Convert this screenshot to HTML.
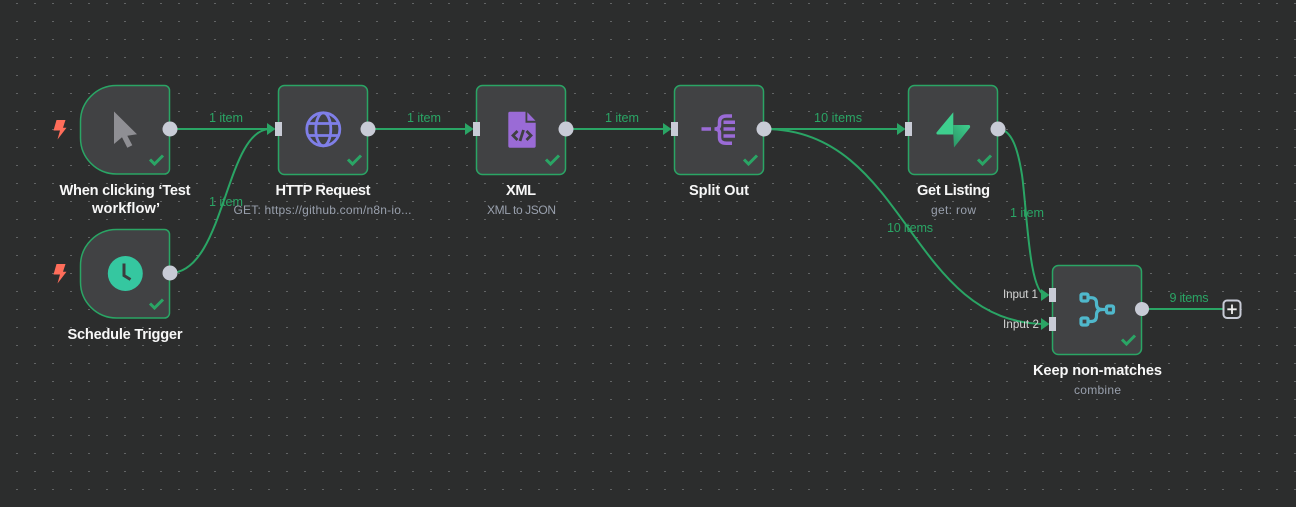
<!DOCTYPE html>
<html><head><meta charset="utf-8"><style>
html,body{margin:0;padding:0;background:#2c2d2d;width:1296px;height:507px;overflow:hidden}
svg{display:block}
text{font-family:"Liberation Sans",sans-serif}
.n{font-size:14.6px;font-weight:700;fill:#f7f7f7}
.s{font-size:12px;fill:#99a0ad}
.e{font-size:12.6px;fill:#2aa565}
.i{font-size:11.6px;fill:#d6d6d6}
</style></head><body>
<svg width="1296" height="507" viewBox="0 0 1296 507" xmlns="http://www.w3.org/2000/svg">
<defs>
<pattern id="g" width="18" height="18" patternUnits="userSpaceOnUse" x="0" y="0"><rect x="16" y="3" width="2" height="1" fill="#626465"/></pattern>
<linearGradient id="sb" x1="0" y1="1" x2="1" y2="0"><stop offset="0" stop-color="#2c9566"/><stop offset="1" stop-color="#3ecf8e"/></linearGradient>
</defs>
<rect width="1296" height="507" fill="#2c2d2d"/>
<rect width="1296" height="507" fill="url(#g)"/>

<!-- edges -->
<g fill="none" stroke="#2aa565" stroke-width="2">
<path d="M170 129H270"/>
<path d="M170 273C225 273 225 129 270 129"/>
<path d="M368 129H468"/>
<path d="M566 129H666"/>
<path d="M764 129H900"/>
<path d="M764 129C908 129 908 324 1046 324"/>
<path d="M998 129C1012 129 1018 150 1022 175C1027 210 1029 295 1046 295"/>
<path d="M1142 309H1223"/>
</g>
<g fill="#2aa565">
<path d="M267 123L275.500 129L267 135Z"/>
<path d="M465 123L473.500 129L465 135Z"/>
<path d="M663 123L671.500 129L663 135Z"/>
<path d="M897 123L905.500 129L897 135Z"/>
<path d="M1041 289L1049.500 295L1041 301Z"/>
<path d="M1041 318L1049.500 324L1041 330Z"/>
</g>

<!-- nodes -->
<g fill="#414244" stroke="#2aa565" stroke-width="1.500">
<path d="M116.500 85.500H164.500a5 5 0 0 1 5 5V169a5 5 0 0 1 -5 5H116.500a36 36 0 0 1 -36 -36V121.500a36 36 0 0 1 36 -36Z"/>
<path d="M116.500 229.500H164.500a5 5 0 0 1 5 5V313a5 5 0 0 1 -5 5H116.500a36 36 0 0 1 -36 -36V265.500a36 36 0 0 1 36 -36Z"/>
<rect x="278.500" y="85.500" width="89" height="89" rx="6"/>
<rect x="476.500" y="85.500" width="89" height="89" rx="6"/>
<rect x="674.500" y="85.500" width="89" height="89" rx="6"/>
<rect x="908.500" y="85.500" width="89" height="89" rx="6"/>
<rect x="1052.500" y="265.500" width="89" height="89" rx="6"/>
</g>

<!-- input ports -->
<g fill="#c8cbd6">
<rect x="275" y="122" width="7" height="14"/>
<rect x="473" y="122" width="7" height="14"/>
<rect x="671" y="122" width="7" height="14"/>
<rect x="905" y="122" width="7" height="14"/>
<rect x="1049" y="288" width="7" height="14"/>
<rect x="1049" y="317" width="7" height="14"/>
</g>
<!-- output ports -->
<g fill="#c8cbd6">
<circle cx="170" cy="129" r="7.500"/>
<circle cx="170" cy="273" r="7.500"/>
<circle cx="368" cy="129" r="7.500"/>
<circle cx="566" cy="129" r="7.500"/>
<circle cx="764" cy="129" r="7.500"/>
<circle cx="998" cy="129" r="7.500"/>
<circle cx="1142" cy="309" r="7"/>
</g>

<!-- checks -->
<g fill="none" stroke="#2aa565" stroke-width="3">
<path d="M150 159.500l4.500 4.500l8.500-8.500"/>
<path d="M150 303.500l4.500 4.500l8.500-8.500"/>
<path d="M348 159.500l4.500 4.500l8.500-8.500"/>
<path d="M546 159.500l4.500 4.500l8.500-8.500"/>
<path d="M744 159.500l4.500 4.500l8.500-8.500"/>
<path d="M978 159.500l4.500 4.500l8.500-8.500"/>
<path d="M1122 339.500l4.500 4.500l8.500-8.500"/>
</g>

<!-- trigger bolts -->
<g fill="#ff6d5a">
<path d="M56.500 120H65.500L63 127.700H66.500L57.500 139.500L60 130.500H53.500Z"/>
<path d="M56.500 264H65.500L63 271.700H66.500L57.500 283.500L60 274.500H53.500Z"/>
</g>

<!-- cursor -->
<path d="M114 111.500V144L122 137.300L127.300 147.700L132.300 145.300L127.300 135.700L137 134.300Z" fill="#8f8f94"/>

<!-- clock -->
<circle cx="125.300" cy="273.500" r="17.500" fill="#35c7a0"/>
<path d="M124 263.500V275.500L130.500 279.500" fill="none" stroke="#3a3c3e" stroke-width="3"/>

<!-- globe -->
<g fill="none" stroke="#7f7fe8" stroke-width="2.800">
<circle cx="323.300" cy="129.300" r="16.500"/>
<ellipse cx="323.300" cy="129.300" rx="7.500" ry="16.500"/>
<path d="M308.500 123.500H338M308.500 135.500H338"/>
</g>

<!-- xml doc -->
<path d="M510 111.700H525.500V122.700H535.700V146a1.700 1.700 0 0 1-1.700 1.700H510a1.700 1.700 0 0 1-1.700-1.700V113.400a1.700 1.700 0 0 1 1.700-1.700Z" fill="#9a6bd6"/>
<path d="M527.300 112.300L535.500 120.700H527.300Z" fill="#9a6bd6"/>
<g fill="none" stroke="#3f4042" stroke-width="2.800">
<path d="M517.500 131L513 135.500L517.500 140"/>
<path d="M526.500 131L531 135.500L526.500 140"/>
<path d="M523.500 130L520 141"/>
</g>

<!-- split out -->
<g fill="none" stroke="#9a6bd6" stroke-width="3.500">
<path d="M701.500 129H711"/>
<path d="M732 116H726.500Q719.500 116 719.500 122V125Q719.500 129 714.500 129Q719.500 129 719.500 133V137.500Q719.500 143.300 726.500 143.300H732"/>
<path d="M723.500 122.300H735M723.500 129H735M723.500 136H735"/>
</g>

<!-- supabase -->
<path d="M953.300 112.200V134.500H937.800C936.500 134.500 936 133 936.700 132.200Z" fill="#3ecf8e"/>
<path d="M953.300 125H969C970 125 970.500 127 969.800 127.800L954 147.500L953.300 134Z" fill="url(#sb)"/>

<!-- merge -->
<g fill="none" stroke="#4fb8cc" stroke-width="3.200">
<rect x="1081" y="294" width="7" height="7" rx="1.500"/>
<rect x="1081" y="318" width="7" height="7" rx="1.500"/>
<rect x="1106.500" y="306" width="7" height="7" rx="1.500"/>
<path d="M1088 297.700H1091Q1096.500 297.700 1096.500 303V304Q1096.500 309.500 1102 309.500H1106.500"/>
<path d="M1088 321.500H1091Q1096.500 321.500 1096.500 316V315Q1096.500 309.500 1102 309.500"/>
</g>

<!-- plus -->
<rect x="1223.500" y="300.500" width="17" height="17.500" rx="3.500" fill="#2c2d2d" stroke="#c8cbd6" stroke-width="2"/>
<path d="M1232 304.500V314M1227.300 309.300H1236.700" stroke="#eee" stroke-width="1.800" fill="none"/>

<!-- edge labels -->
<text class="e" x="209" y="122" textLength="34" lengthAdjust="spacing">1 item</text>
<text class="e" x="209" y="206" textLength="34" lengthAdjust="spacing">1 item</text>
<text class="e" x="407" y="122" textLength="34" lengthAdjust="spacing">1 item</text>
<text class="e" x="605" y="122" textLength="34" lengthAdjust="spacing">1 item</text>
<text class="e" x="814" y="122" textLength="48" lengthAdjust="spacing">10 items</text>
<text class="e" x="887" y="232" textLength="46" lengthAdjust="spacing">10 items</text>
<text class="e" x="1010" y="217" textLength="34" lengthAdjust="spacing">1 item</text>
<text class="e" x="1169.500" y="302" textLength="39" lengthAdjust="spacing">9 items</text>
<text class="i" x="1003" y="298" textLength="35" lengthAdjust="spacing">Input 1</text>
<text class="i" x="1003" y="328" textLength="36" lengthAdjust="spacing">Input 2</text>

<!-- node labels -->
<text class="n" x="59.500" y="195" textLength="131" lengthAdjust="spacing">When clicking ‘Test</text>
<text class="n" x="92" y="213" textLength="68" lengthAdjust="spacing">workflow’</text>
<text class="n" x="67.500" y="339" textLength="115" lengthAdjust="spacing">Schedule Trigger</text>
<text class="n" x="275.500" y="195" textLength="95" lengthAdjust="spacing">HTTP Request</text>
<text class="s" x="233.500" y="214" textLength="178" lengthAdjust="spacing">GET: https://github.com/n8n-io...</text>
<text class="n" x="506" y="195" textLength="30" lengthAdjust="spacing">XML</text>
<text class="s" x="487" y="214" textLength="69" lengthAdjust="spacing">XML to JSON</text>
<text class="n" x="689" y="195" textLength="60" lengthAdjust="spacing">Split Out</text>
<text class="n" x="917" y="195" textLength="73" lengthAdjust="spacing">Get Listing</text>
<text class="s" x="931" y="214" textLength="45" lengthAdjust="spacing">get: row</text>
<text class="n" x="1033" y="375" textLength="129" lengthAdjust="spacing">Keep non-matches</text>
<text class="s" x="1074" y="394" textLength="47" lengthAdjust="spacing">combine</text>
</svg>
</body></html>
